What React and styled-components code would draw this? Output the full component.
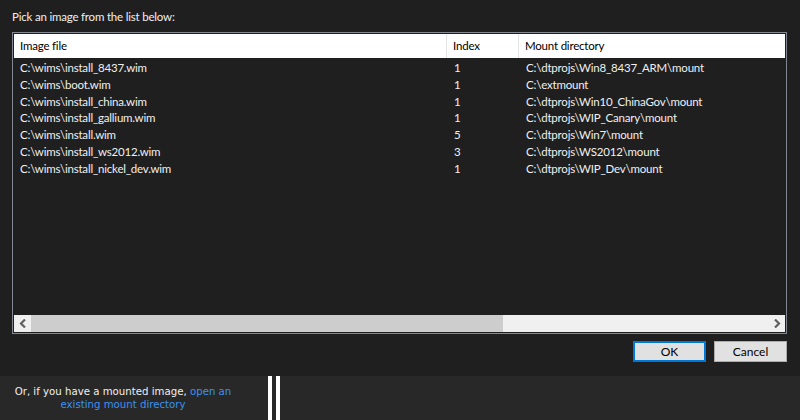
import React from "react";
import styled, { createGlobalStyle } from "styled-components";

const GlobalStyle = createGlobalStyle`
  html, body {
    margin: 0;
    padding: 0;
    background: #1f1f1f;
  }
  * {
    box-sizing: border-box;
  }
`;

const Page = styled.div`
  width: 800px;
  height: 420px;
  display: flex;
  flex-direction: column;
  background: #1f1f1f;
  font-family: Lato, "Noto Sans", sans-serif;
  font-size: 11.5px;
  letter-spacing: -0.2px;
  color: #f0f0f0;
  overflow: hidden;
`;

const Main = styled.div`
  flex: 1;
  display: flex;
  flex-direction: column;
  padding: 0 13px 0 12px;
`;

const Title = styled.div`
  height: 32px;
  line-height: 34px;
`;

const ListBox = styled.div`
  height: 302px;
  border: 1px solid #828790;
  padding: 1px;
  display: flex;
  flex-direction: column;
  background: #1f1f1f;
`;

const cols = "433px 72px 1fr";

const Header = styled.div`
  display: grid;
  grid-template-columns: ${cols};
  height: 24px;
  background: #ffffff;
  color: #000;
`;

const HeaderCell = styled.div`
  padding-left: 6px;
  line-height: 23px;
  border-right: ${(p) => (p.$last ? "none" : "1px solid #e5e5e5")};
`;

const Rows = styled.div`
  flex: 1;
  padding-top: 1px;
`;

const Row = styled.div`
  display: grid;
  grid-template-columns: ${cols};
  height: 16.8px;
  line-height: 17px;
`;

const Cell = styled.div`
  padding-left: ${(p) => (p.$first ? "6px" : "7px")};
  white-space: nowrap;
  overflow: hidden;
`;

const HScroll = styled.div`
  height: 17px;
  display: flex;
  background: #f0f0f0;
`;

const ScrollArrow = styled.div`
  width: 17px;
  display: flex;
  align-items: center;
  justify-content: center;
`;

const ScrollTrack = styled.div`
  flex: 1;
  display: flex;
`;

const Thumb = styled.div`
  height: 100%;
  background: #cdcdcd;
`;

const ButtonRow = styled.div`
  display: flex;
  justify-content: flex-end;
  gap: 8px;
  margin-top: 7px;
`;

const DialogButton = styled.button`
  width: 73px;
  height: 21px;
  padding: 0;
  background: #e1e1e1;
  border: ${(p) => (p.$primary ? "2px solid #0078d7" : "1px solid #adadad")};
  color: #000;
  font-family: inherit;
  font-size: 12px;
  line-height: 17px;
`;

const Footer = styled.div`
  height: 44px;
  background: #282828;
  display: flex;
`;

const FooterText = styled.div`
  width: 246px;
  padding-top: 9px;
  text-align: center;
  line-height: 13px;
  font-family: "DejaVu Sans", sans-serif;
  font-size: 10.2px;
  letter-spacing: 0;
  color: #f0f0f0;
`;

const Link = styled.a`
  color: #3a92f0;
  text-decoration: none;
`;

const Splitter = styled.div`
  margin-left: 22px;
  display: flex;
  gap: 4px;
`;

const SplitBar = styled.div`
  width: 4px;
  height: 100%;
  background: #ffffff;
`;

const Chevron = ({ dir }) => (
  <svg width="8" height="9" viewBox="0 0 8 9">
    <path
      d={dir === "left" ? "M6 0.5 L2 4.5 L6 8.5" : "M2 0.5 L6 4.5 L2 8.5"}
      fill="none"
      stroke="#606060"
      strokeWidth="2.2"
    />
  </svg>
);

const images = [
  ["C:\\wims\\install_8437.wim", "1", "C:\\dtprojs\\Win8_8437_ARM\\mount"],
  ["C:\\wims\\boot.wim", "1", "C:\\extmount"],
  ["C:\\wims\\install_china.wim", "1", "C:\\dtprojs\\Win10_ChinaGov\\mount"],
  ["C:\\wims\\install_gallium.wim", "1", "C:\\dtprojs\\WIP_Canary\\mount"],
  ["C:\\wims\\install.wim", "5", "C:\\dtprojs\\Win7\\mount"],
  ["C:\\wims\\install_ws2012.wim", "3", "C:\\dtprojs\\WS2012\\mount"],
  ["C:\\wims\\install_nickel_dev.wim", "1", "C:\\dtprojs\\WIP_Dev\\mount"],
];

const App = () => {
  return (
    <Page>
      <GlobalStyle />
      <Main>
        <Title>Pick an image from the list below:</Title>
        <ListBox>
          <Header>
            <HeaderCell>Image file</HeaderCell>
            <HeaderCell>Index</HeaderCell>
            <HeaderCell $last>Mount directory</HeaderCell>
          </Header>
          <Rows>
            {images.map(([file, index, dir]) => (
              <Row key={file}>
                <Cell $first>{file}</Cell>
                <Cell>{index}</Cell>
                <Cell>{dir}</Cell>
              </Row>
            ))}
          </Rows>
          <HScroll>
            <ScrollArrow>
              <Chevron dir="left" />
            </ScrollArrow>
            <ScrollTrack>
              <Thumb style={{ width: "64%" }} />
            </ScrollTrack>
            <ScrollArrow>
              <Chevron dir="right" />
            </ScrollArrow>
          </HScroll>
        </ListBox>
        <ButtonRow>
          <DialogButton $primary>OK</DialogButton>
          <DialogButton>Cancel</DialogButton>
        </ButtonRow>
      </Main>
      <Footer>
        <FooterText>
          Or, if you have a mounted image, <Link href="#">open an existing mount directory</Link>
        </FooterText>
        <Splitter>
          <SplitBar />
          <SplitBar />
        </Splitter>
      </Footer>
    </Page>
  );
};

export default App;
